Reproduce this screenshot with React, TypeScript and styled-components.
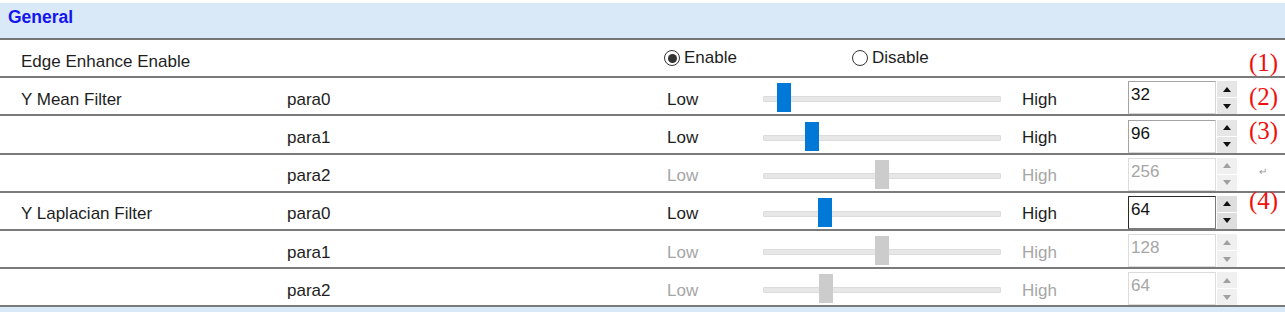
import React from "react";
import styled, { createGlobalStyle, css } from "styled-components";

const Global = createGlobalStyle`
  html, body { margin: 0; padding: 0; background: #fff; }
  body { font-family: "Liberation Sans", Arial, sans-serif; }
`;

const Page = styled.div`
  width: 1285px;
  height: 312px;
  overflow: hidden;
  padding-top: 3px;
  box-sizing: border-box;
  position: relative;
  background: #fff;
`;

const Header = styled.div`
  height: 37px;
  box-sizing: border-box;
  background: #d9e9f7;
  border-bottom: 2px solid #767676;
  padding: 3px 0 0 8px;
  font-size: 17.5px;
  font-weight: bold;
  color: #1515f0;
  line-height: 22px;
`;

const Row = styled.div`
  height: 38.2px;
  box-sizing: border-box;
  border-bottom: 2px solid #7a7a7a;
  display: grid;
  grid-template-columns: 266px 380px 96px 238px 21px 106px 109px 1fr;
  padding-left: 21px;
  align-items: stretch;
`;

const Footer = styled.div`
  height: 6px;
  background: #d9e9f7;
`;

const Cell = styled.div<{ $dim?: boolean }>`
  font-size: 17px;
  line-height: 19px;
  color: ${(p) => (p.$dim ? "#a6a6a6" : "#1e1e1e")};
  align-self: center;
  padding-top: 6px;
  white-space: nowrap;
`;

const RadioGroup = styled.div`
  grid-column: 3 / 8;
  display: flex;
  align-items: center;
  margin-left: -3px;
  padding-bottom: 0px;
`;

const RadioItem = styled.label<{ $w?: number }>`
  display: flex;
  align-items: center;
  gap: 4px;
  width: ${(p) => (p.$w ? `${p.$w}px` : "auto")};
  font-size: 17px;
  color: #1e1e1e;
`;

const RadioCircle = styled.span<{ $on?: boolean }>`
  width: 16px;
  height: 16px;
  box-sizing: border-box;
  border-radius: 50%;
  border: 1px solid #333;
  background: #fff;
  display: inline-flex;
  align-items: center;
  justify-content: center;
  ${(p) =>
    p.$on &&
    css`
      &::after {
        content: "";
        width: 9px;
        height: 9px;
        border-radius: 50%;
        background: #333;
      }
    `}
`;

const Slider = styled.div`
  position: relative;
  align-self: end;
  height: 29px;
  margin-bottom: 2px;
`;

const Track = styled.div`
  position: absolute;
  left: 0;
  right: 0;
  top: 13px;
  height: 4px;
  background: #e7e7e7;
  border: 1px solid #dcdcdc;
  border-radius: 1px;
`;

const Thumb = styled.div<{ $dim?: boolean }>`
  position: absolute;
  top: 0;
  width: 14px;
  height: 29px;
  background: ${(p) => (p.$dim ? "#cccccc" : "#0078d7")};
`;

const Spin = styled.div`
  grid-column: 7;
  align-self: end;
  display: flex;
  height: 33px;
`;

const SpinBox = styled.div<{ $dim?: boolean; $focus?: boolean }>`
  width: 88px;
  box-sizing: border-box;
  border: 1px solid #a3a3a3;
  border-right-color: #d6d6d6;
  border-bottom-color: #d6d6d6;
  ${(p) =>
    p.$dim &&
    css`
      border-color: #dcdcdc;
    `}
  ${(p) =>
    p.$focus &&
    css`
      border: 1px solid #2a2a2a;
      border-right-color: #7a7a7a;
      border-bottom-color: #7a7a7a;
    `}
  color: ${(p) => (p.$dim ? "#a6a6a6" : "#111")};
  font-size: 17px;
  line-height: 19px;
  padding: 3px 0 0 2px;
  background: #fff;
`;

const SpinButtons = styled.div`
  margin-left: 1px;
  width: 20px;
  display: flex;
  flex-direction: column;
  gap: 1px;
`;

const SpinBtn = styled.div<{ $dim?: boolean; $focus?: boolean }>`
  flex: 1;
  background: ${(p) => (p.$focus ? "#dedede" : p.$dim ? "#f0f0f0" : "#e6e6e6")};
  display: flex;
  align-items: center;
  justify-content: center;
  color: ${(p) => (p.$dim ? "#a0a0a0" : "#111")};
`;

const Note = styled.div<{ $top: number }>`
  position: absolute;
  left: 1249px;
  top: ${(p) => p.$top}px;
  font-family: "Liberation Serif", "Times New Roman", serif;
  font-size: 25px;
  line-height: 24px;
  color: #f01010;
`;

const Mark = styled.div`
  position: absolute;
  left: 1259px;
  top: 166px;
  font-size: 10px;
  color: #999;
`;

const Arrow = ({ up }: { up?: boolean }) => (
  <svg width="8" height="5" viewBox="0 0 8 5">
    <path d={up ? "M0 5 L4 0 L8 5 Z" : "M0 0 L4 5 L8 0 Z"} fill="currentColor" />
  </svg>
);

type RowData = {
  label: string;
  para: string;
  value: number;
  thumb: number;
  dim?: boolean;
  focus?: boolean;
};

const rows: RowData[] = [
  { label: "Y Mean Filter", para: "para0", value: 32, thumb: 14 },
  { label: "", para: "para1", value: 96, thumb: 42 },
  { label: "", para: "para2", value: 256, thumb: 112, dim: true },
  { label: "Y Laplacian Filter", para: "para0", value: 64, thumb: 55, focus: true },
  { label: "", para: "para1", value: 128, thumb: 112, dim: true },
  { label: "", para: "para2", value: 64, thumb: 56, dim: true },
];

export default function App() {
  return (
    <>
      <Global />
      <Page>
        <Header>General</Header>
        <Row>
          <Cell>Edge Enhance Enable</Cell>
          <div />
          <RadioGroup>
            <RadioItem $w={188}>
              <RadioCircle $on />
              Enable
            </RadioItem>
            <RadioItem>
              <RadioCircle />
              Disable
            </RadioItem>
          </RadioGroup>
        </Row>
        {rows.map((r, i) => (
          <Row key={i}>
            <Cell>{r.label}</Cell>
            <Cell>{r.para}</Cell>
            <Cell $dim={r.dim}>Low</Cell>
            <Slider>
              <Track />
              <Thumb $dim={r.dim} style={{ left: r.thumb }} />
            </Slider>
            <div />
            <Cell $dim={r.dim}>High</Cell>
            <Spin>
              <SpinBox $dim={r.dim} $focus={r.focus}>
                {r.value}
              </SpinBox>
              <SpinButtons>
                <SpinBtn $dim={r.dim} $focus={r.focus}>
                  <Arrow up />
                </SpinBtn>
                <SpinBtn $dim={r.dim} $focus={r.focus}>
                  <Arrow />
                </SpinBtn>
              </SpinButtons>
            </Spin>
          </Row>
        ))}
        <Footer />
        <Note $top={51}>(1)</Note>
        <Note $top={85}>(2)</Note>
        <Note $top={119}>(3)</Note>
        <Mark>↵</Mark>
        <Note $top={189}>(4)</Note>
      </Page>
    </>
  );
}
